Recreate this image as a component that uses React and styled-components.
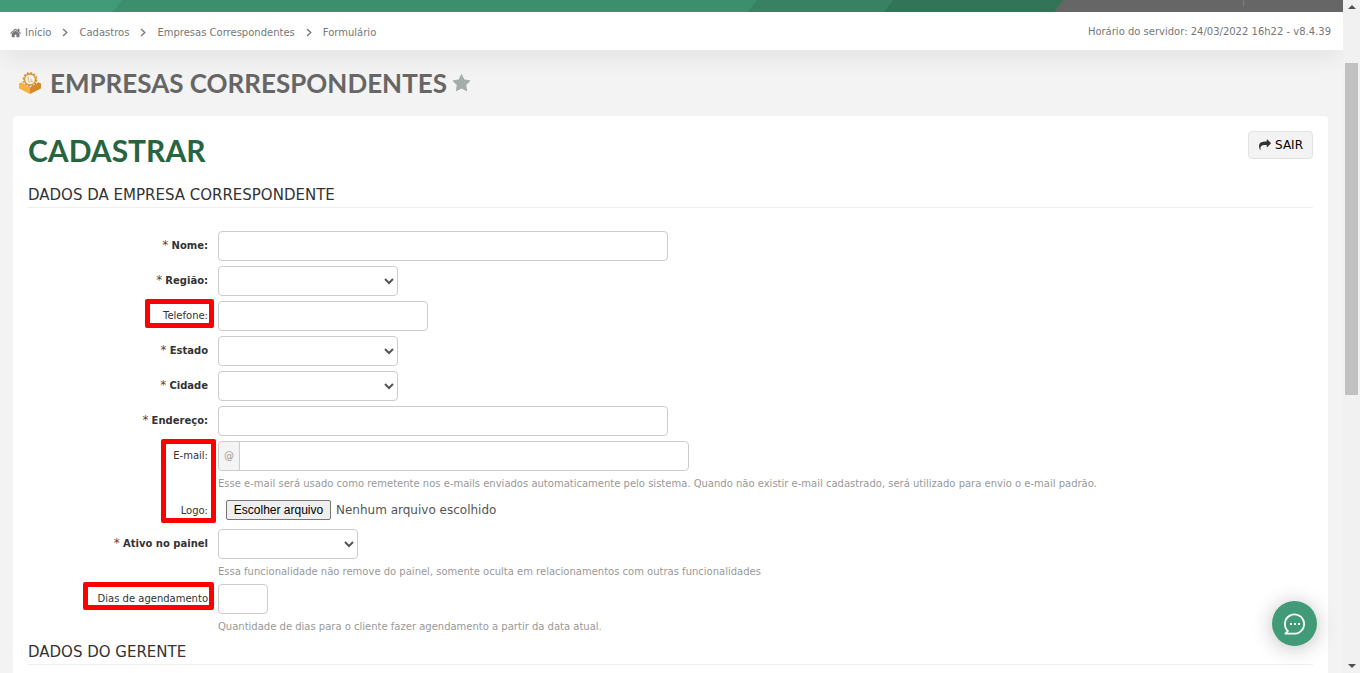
import { Fragment } from "react";
import styled, { createGlobalStyle } from "styled-components";

const crumbs = ["Cadastros", "Empresas Correspondentes", "Formulário"];

function HomeIcon() {
  return (
    <svg width="12" height="12" viewBox="0 0 1792 1792" fill="currentColor" aria-hidden="true">
      <path d="M1408 992v480q0 26-19 45t-45 19h-384v-384h-256v384h-384q-26 0-45-19t-19-45v-480q0-1 .5-3t.5-3l575-474 575 474q1 2 1 6zm223-69l-62 74q-8 9-21 11h-3q-13 0-21-7l-692-577-692 577q-12 8-24 7-13-2-21-11l-62-74q-8-10-7-23.5t11-21.5l719-599q32-26 76-26t76 26l244 204v-195q0-14 9-23t23-9h192q14 0 23 9t9 23v408l219 182q10 8 11 21.5t-7 23.5z" />
    </svg>
  );
}

function ShareIcon() {
  return (
    <svg width="12" height="12" viewBox="0 0 1792 1792" fill="#333" aria-hidden="true">
      <path d="M1792 640q0 26-19 45l-512 512q-19 19-45 19t-45-19-19-45v-256h-224q-98 0-175.5 6t-154 21.5-133 42.5-105.5 69.5-80 101-48.5 138.5-17.5 181q0 55 5 123 0 6 2.5 23.5t2.5 26.5q0 15-8.5 25t-23.5 10q-16 0-28-17-7-9-13-22t-13.5-30-10.5-24q-127-285-127-451 0-199 53-333 162-403 875-403h224v-256q0-26 19-45t45-19 45 19l512 512q19 19 19 45z" />
    </svg>
  );
}

function StarIcon() {
  return (
    <svg width="19" height="19" viewBox="0 0 1792 1792" fill="#a5adab" aria-hidden="true">
      <path d="M1728 647q0 22-26 48l-363 354 86 500q1 7 1 20 0 21-10.5 35.5t-30.5 14.5q-19 0-40-12l-449-236-449 236q-22 12-40 12-21 0-31.5-14.5t-10.5-35.5q0-6 2-20l86-500-364-354q-25-27-25-48 0-37 56-46l502-73 225-455q19-41 49-41t49 41l225 455 502 73q56 9 56 46z" />
    </svg>
  );
}

function ChevronIcon() {
  return (
    <svg width="6" height="9" viewBox="0 0 6 9" fill="none" stroke="#777" strokeWidth="1.3" aria-hidden="true">
      <path d="M1 1l3.8 3.5L1 8" />
    </svg>
  );
}

function BoxIcon() {
  return (
    <svg width="22" height="22" viewBox="0 0 22 22" aria-hidden="true">
      <circle cx="11" cy="7.5" r="6.6" fill="none" stroke="#d08a2b" strokeWidth="1.5" strokeDasharray="2 1.45" />
      <circle cx="11" cy="7.5" r="5.5" fill="#f6f1e9" stroke="#d8922f" strokeWidth="1.3" />
      <path d="M9.3 4.6v4.2l1.8 2.2M12 7v2.5h2" fill="none" stroke="#dcae6b" strokeWidth="0.9" />
      <path d="M0 11.5l2.6-1.2L11 15.6v6.4L0 16.5z" fill="#fbb040" />
      <path d="M22 11.5l-2.6-1.2L11 15.6v6.4l11-5.5z" fill="#d5892a" />
    </svg>
  );
}

function ChatIcon() {
  return (
    <svg width="24" height="24" viewBox="0 0 24 24" fill="none" aria-hidden="true">
      <path d="M2.4 21.6l2.5-2.6A9.6 9.6 0 1 1 12 21.6z" stroke="#fff" strokeWidth="1.8" strokeLinejoin="round" />
      <path d="M7 11h2v2H7zM11 11h2v2h-2zM15 11h2v2h-2z" fill="#fff" />
    </svg>
  );
}

function Field({ id, label, required, mark, help, children }) {
  return (
    <Row>
      <LabelCell>
        <label htmlFor={id}>
          {required ? (
            <>
              <Asterisk>*</Asterisk> <strong>{label}</strong>
            </>
          ) : (
            label
          )}
        </label>
        {mark && <Mark $width={mark.width} $height={mark.height} $right={mark.right} />}
      </LabelCell>
      <div>
        {children}
        {help && <Help>{help}</Help>}
      </div>
    </Row>
  );
}

function App() {
  return (
    <Page>
      <GlobalStyle />
      <Main>
        <TopBar>
          <Stripe $color="#419b78" $width="122px" />
          <Stripe $color="#3c8e6d" $grow />
          <Stripe $color="#388263" $width="145px" />
          <Stripe $color="#317457" $width="179px" />
          <Stripe $color="#666" $width="289px">
            <Divider />
          </Stripe>
        </TopBar>
        <CrumbBar>
          <Crumbs aria-label="Navegação">
            <a href="#inicio">
              <HomeIcon /> Início
            </a>
            {crumbs.map((crumb) => (
              <Fragment key={crumb}>
                <ChevronIcon />
                <a href={`#${crumb}`}>{crumb}</a>
              </Fragment>
            ))}
          </Crumbs>
          <span>Horário do servidor: 24/03/2022 16h22 - v8.4.39</span>
        </CrumbBar>
        <TitleBar>
          <BoxIcon />
          <h1>EMPRESAS CORRESPONDENTES</h1>
          <StarButton type="button" aria-label="Favoritar">
            <StarIcon />
          </StarButton>
        </TitleBar>
        <Card>
          <CardHeader>
            <h2>CADASTRAR</h2>
            <ExitButton type="button">
              <ShareIcon />
              SAIR
            </ExitButton>
          </CardHeader>
          <SectionTitle>DADOS DA EMPRESA CORRESPONDENTE</SectionTitle>
          <Form>
            <Field id="nome" label="Nome:" required>
              <Input id="nome" type="text" $width={450} />
            </Field>
            <Field id="regiao" label="Região:" required>
              <Select id="regiao" $width={180} />
            </Field>
            <Field id="telefone" label="Telefone:" mark={{ width: 69, height: 29, right: -6 }}>
              <Input id="telefone" type="tel" $width={210} />
            </Field>
            <Field id="estado" label="Estado" required>
              <Select id="estado" $width={180} />
            </Field>
            <Field id="cidade" label="Cidade" required>
              <Select id="cidade" $width={180} />
            </Field>
            <Field id="endereco" label="Endereço:" required>
              <Input id="endereco" type="text" $width={450} />
            </Field>
            <Field
              id="email"
              label="E-mail:"
              mark={{ width: 55, height: 84, right: -8 }}
              help="Esse e-mail será usado como remetente nos e-mails enviados automaticamente pelo sistema. Quando não existir e-mail cadastrado, será utilizado para envio o e-mail padrão."
            >
              <InputGroup>
                <AddOn>@</AddOn>
                <Input id="email" type="email" $width={450} />
              </InputGroup>
            </Field>
            <Field id="logo" label="Logo:">
              <FilePicker>
                <input id="logo" type="file" />
                <FileButton htmlFor="logo">Escolher arquivo</FileButton>
                <span>Nenhum arquivo escolhido</span>
              </FilePicker>
            </Field>
            <Field
              id="ativo"
              label="Ativo no painel"
              required
              help="Essa funcionalidade não remove do painel, somente oculta em relacionamentos com outras funcionalidades"
            >
              <Select id="ativo" $width={140} />
            </Field>
            <Field
              id="dias"
              label="Dias de agendamento"
              mark={{ width: 131, height: 28, right: -6 }}
              help="Quantidade de dias para o cliente fazer agendamento a partir da data atual."
            >
              <Input id="dias" type="text" $width={50} />
            </Field>
          </Form>
          <SectionTitle>DADOS DO GERENTE</SectionTitle>
        </Card>
      </Main>
      <ScrollBar aria-hidden="true">
        <Arrow $up />
        <Thumb />
        <Arrow />
      </ScrollBar>
      <ChatButton type="button" aria-label="Abrir chat">
        <ChatIcon />
      </ChatButton>
    </Page>
  );
}

const GlobalStyle = createGlobalStyle`
  * {
    box-sizing: border-box;
  }
  body {
    margin: 0;
    background: #f3f3f3;
    color: #333;
    font-family: Verdana, "DejaVu Sans", sans-serif;
    font-size: 10px;
    line-height: 20px;
  }
  h1, h2, h3 {
    margin: 0;
  }
  button, input, select {
    font-family: inherit;
  }
`;

const Page = styled.div`
  display: flex;
  height: 100vh;
  overflow: hidden;
`;

const Main = styled.main`
  flex: 1;
  min-width: 0;
  overflow: hidden;
`;

const TopBar = styled.div`
  display: flex;
  height: 12px;
`;

const Stripe = styled.div`
  flex: ${(props) => (props.$grow ? "1" : "none")};
  width: ${(props) => props.$width};
  background: ${(props) => props.$color};
  & + & {
    margin-left: -9px;
    clip-path: polygon(9px 0, 100% 0, 100% 100%, 0 100%);
  }
`;

const Divider = styled.div`
  width: 1px;
  height: 7px;
  margin-left: 189px;
  background: #7d7d7d;
`;

const CrumbBar = styled.header`
  display: flex;
  align-items: center;
  justify-content: space-between;
  height: 38px;
  padding: 2px 12px 0 10px;
  background: #fff;
  box-shadow: 0 15px 20px -5px rgba(0, 0, 0, 0.06);
  color: #777;
`;

const Crumbs = styled.nav`
  display: flex;
  align-items: center;
  gap: 11px;
  padding-top: 1px;
  a {
    display: flex;
    align-items: center;
    gap: 3px;
    color: #777;
    text-decoration: none;
  }
`;

const TitleBar = styled.div`
  display: flex;
  align-items: center;
  height: 66px;
  padding: 0 19px;
  h1 {
    margin: 0 5px 0 9px;
    color: #666;
    font: bold 26px/32px Lato, sans-serif;
  }
`;

const StarButton = styled.button`
  display: flex;
  padding: 0;
  border: 0;
  background: none;
`;

const Card = styled.section`
  margin: 0 15px 0 13px;
  padding: 15px;
  border-radius: 4px;
  background: #fff;
`;

const CardHeader = styled.div`
  display: flex;
  align-items: flex-start;
  justify-content: space-between;
  padding-bottom: 8px;
  h2 {
    color: #26653f;
    font: bold 30px/38px Lato, sans-serif;
  }
`;

const ExitButton = styled.button`
  display: flex;
  align-items: center;
  gap: 4px;
  height: 28px;
  padding: 0 9px 0 10px;
  border: 1px solid #e2e2e2;
  border-radius: 4px;
  background: #f3f3f3;
  color: #000;
  font-size: 12px;
`;

const SectionTitle = styled.h3`
  margin-top: 8px;
  padding-bottom: 2px;
  border-bottom: 1px solid #eee;
  color: #333;
  font-size: 15px;
  font-weight: normal;
  line-height: 20px;
`;

const Form = styled.form`
  display: flex;
  flex-direction: column;
  gap: 5px;
  padding-top: 23px;
`;

const Row = styled.div`
  display: grid;
  grid-template-columns: 180px 1fr;
  column-gap: 10px;
`;

const LabelCell = styled.div`
  position: relative;
  padding-top: 5px;
  text-align: right;
`;

const Asterisk = styled.span`
  color: #6b3a4a;
  font-size: 12px;
  line-height: 1;
`;

const Mark = styled.span`
  position: absolute;
  top: -2px;
  right: ${(props) => props.$right}px;
  width: ${(props) => props.$width}px;
  height: ${(props) => props.$height}px;
  border: 5px solid #f00;
  border-radius: 2px;
  pointer-events: none;
`;

const Input = styled.input`
  display: block;
  width: ${(props) => props.$width}px;
  height: 30px;
  padding: 4px 6px;
  border: 1px solid #ccc;
  border-radius: 4px;
  background: #fff;
`;

const Select = styled.select`
  display: block;
  width: ${(props) => props.$width}px;
  height: 30px;
  padding: 4px 6px;
  border: 1px solid #ccc;
  border-radius: 4px;
  background-color: #fff;
  color: #555;
`;

const InputGroup = styled.div`
  display: flex;
  input {
    border-radius: 0 4px 4px 0;
  }
`;

const AddOn = styled.span`
  width: 22px;
  height: 30px;
  margin-right: -1px;
  border: 1px solid #ccc;
  border-radius: 4px 0 0 4px;
  background: #f4f4f4;
  color: #999;
  line-height: 28px;
  text-align: center;
`;

const Help = styled.p`
  margin: 3px 0 -3px;
  color: #999;
`;

const FilePicker = styled.div`
  display: flex;
  align-items: center;
  gap: 5px;
  height: 28px;
  padding-left: 8px;
  color: #555;
  font-size: 12px;
  input {
    position: absolute;
    width: 1px;
    height: 1px;
    opacity: 0;
  }
`;

const FileButton = styled.label`
  width: 105px;
  height: 20px;
  border: 1px solid #767676;
  border-radius: 2px;
  background: #efefef;
  color: #000;
  font: 12px/18px "Liberation Sans", Arial, sans-serif;
  text-align: center;
`;

const ScrollBar = styled.div`
  display: flex;
  flex-direction: column;
  align-items: center;
  width: 17px;
  padding: 5px 0;
  background: #f1f1f1;
`;

const Arrow = styled.span`
  border: 4px solid transparent;
  border-top-width: ${(props) => (props.$up ? 0 : 4)}px;
  border-bottom-width: ${(props) => (props.$up ? 4 : 0)}px;
  border-top-color: #505050;
  border-bottom-color: #505050;
`;

const Thumb = styled.span`
  width: 13px;
  height: 50%;
  margin: 54px 0 auto;
  background: #c1c1c1;
`;

const ChatButton = styled.button`
  position: fixed;
  right: 43px;
  bottom: 27px;
  display: flex;
  align-items: center;
  justify-content: center;
  width: 45px;
  height: 45px;
  padding: 0;
  border: 0;
  border-radius: 50%;
  background: #419b78;
  box-shadow: 0 2px 20px rgba(0, 0, 0, 0.25);
`;

export default App;
